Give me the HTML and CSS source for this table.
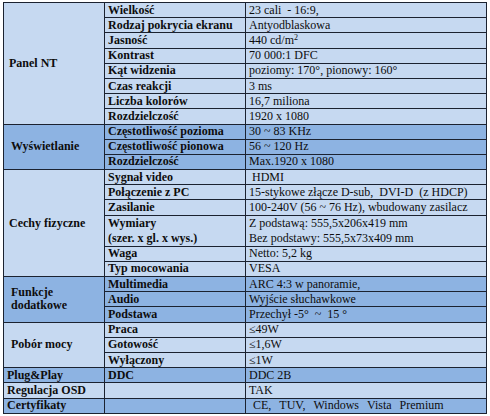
FILE: index.html
```html
<!DOCTYPE html>
<html lang="pl">
<head>
    <meta charset="UTF-8">
    <meta name="viewport" content="width=device-width, initial-scale=1.0">
    <title>Specyfikacja monitora</title>
    <link rel="stylesheet" href="styles.css">
</head>
<body>
    <table class="spec">
        <colgroup>
            <col class="col_group">
            <col class="col_name">
            <col class="col_value">
        </colgroup>
        <tbody class="light">
            <tr>
                <th rowspan="8">Panel NT</th>
                <td class="name">Wielkość</td>
                <td>23 cali &nbsp;- 16:9,</td>
            </tr>
            <tr>
                <td class="name">Rodzaj pokrycia ekranu</td>
                <td>Antyodblaskowa</td>
            </tr>
            <tr>
                <td class="name">Jasność</td>
                <td>440 cd/m<sup>2</sup></td>
            </tr>
            <tr>
                <td class="name">Kontrast</td>
                <td>70 000:1 DFC</td>
            </tr>
            <tr>
                <td class="name">Kąt widzenia</td>
                <td>poziomy: 170°, pionowy: 160°</td>
            </tr>
            <tr>
                <td class="name">Czas reakcji</td>
                <td>3 ms</td>
            </tr>
            <tr>
                <td class="name">Liczba kolorów</td>
                <td>16,7 miliona</td>
            </tr>
            <tr>
                <td class="name">Rozdzielczość</td>
                <td>1920 x 1080</td>
            </tr>
        </tbody>
        <tbody class="dark">
            <tr>
                <th rowspan="3" class="pad">Wyświetlanie</th>
                <td class="name">Częstotliwość pozioma</td>
                <td>30 ~ 83 KHz</td>
            </tr>
            <tr>
                <td class="name">Częstotliwość pionowa</td>
                <td>56 ~ 120 Hz</td>
            </tr>
            <tr>
                <td class="name">Rozdzielczość</td>
                <td>Max.1920 x 1080</td>
            </tr>
        </tbody>
        <tbody class="light">
            <tr>
                <th rowspan="7">Cechy fizyczne</th>
                <td class="name">Sygnał video</td>
                <td>&nbsp;HDMI</td>
            </tr>
            <tr>
                <td class="name">Połączenie z PC</td>
                <td>15-stykowe złącze D-sub, &nbsp;DVI-D &nbsp;(z HDCP)</td>
            </tr>
            <tr>
                <td class="name">Zasilanie</td>
                <td>100-240V (56 ~ 76 Hz), wbudowany zasilacz</td>
            </tr>
            <tr class="double">
                <td class="name">Wymiary<br>(szer. x gl. x wys.)</td>
                <td>Z podstawą: 555,5x206x419 mm<br>Bez podstawy: 555,5x73x409 mm</td>
            </tr>
            <tr>
                <td class="name">Waga</td>
                <td>Netto: 5,2 kg</td>
            </tr>
            <tr>
                <td class="name">Typ mocowania</td>
                <td>VESA</td>
            </tr>
        </tbody>
        <tbody class="dark">
            <tr>
                <th rowspan="3" class="pad">Funkcje<br>dodatkowe</th>
                <td class="name">Multimedia</td>
                <td>ARC 4:3 w panoramie,</td>
            </tr>
            <tr>
                <td class="name">Audio</td>
                <td>Wyjście słuchawkowe</td>
            </tr>
            <tr>
                <td class="name">Podstawa</td>
                <td>Przechył -5° &nbsp;~ &nbsp;15 °</td>
            </tr>
        </tbody>
        <tbody class="light">
            <tr>
                <th rowspan="3" class="pad">Pobór mocy</th>
                <td class="name">Praca</td>
                <td>≤49W</td>
            </tr>
            <tr>
                <td class="name">Gotowość</td>
                <td>≤1,6W</td>
            </tr>
            <tr>
                <td class="name">Wyłączony</td>
                <td>≤1W</td>
            </tr>
        </tbody>
        <tbody class="dark">
            <tr>
                <th class="small">Plug&amp;Play</th>
                <td class="name">DDC</td>
                <td>DDC 2B</td>
            </tr>
        </tbody>
        <tbody class="light">
            <tr>
                <th class="small">Regulacja OSD</th>
                <td class="name"></td>
                <td>TAK</td>
            </tr>
        </tbody>
        <tbody class="dark">
            <tr>
                <th class="small">Certyfikaty</th>
                <td class="name"></td>
                <td class="wide">&nbsp;CE, &nbsp;TUV, &nbsp;Windows &nbsp;Vista &nbsp;Premium</td>
            </tr>
        </tbody>
    </table>
</body>
</html>
```

FILE: styles.css
```css
* {
    margin: 0;
    padding: 0;
}
body {
    background: #fff;
    padding: 2px 0 0 3px;
    font-family: "Liberation Serif", "Times New Roman", serif;
    color: #0d0d0d;
}
table.spec {
    width: 483px;
    border-collapse: collapse;
    table-layout: fixed;
    font-size: 12px;
}
col.col_group {
    width: 101px;
}
col.col_name {
    width: 141px;
}
col.col_value {
    width: 241px;
}
tr {
    height: 15.2px;
}
tr.double {
    height: 30.4px;
}
th, td {
    border: 1px solid #1b2230;
    line-height: 13px;
    padding: 0 3px;
    text-align: left;
    vertical-align: middle;
    white-space: nowrap;
}
th {
    font-weight: 700;
    padding-left: 5px;
}
th.pad {
    padding-left: 7px;
}
th.small {
    padding-left: 3px;
}
td.name {
    font-weight: 700;
}
tr.double td {
    line-height: 15px;
}
tbody.light th, tbody.light td {
    background: #c6d9f1;
}
tbody.dark th, tbody.dark td {
    background: #8db3e2;
}
sup {
    font-size: 8px;
    line-height: 0;
    vertical-align: 4px;
}
td.wide {
    word-spacing: 1px;
}
```
